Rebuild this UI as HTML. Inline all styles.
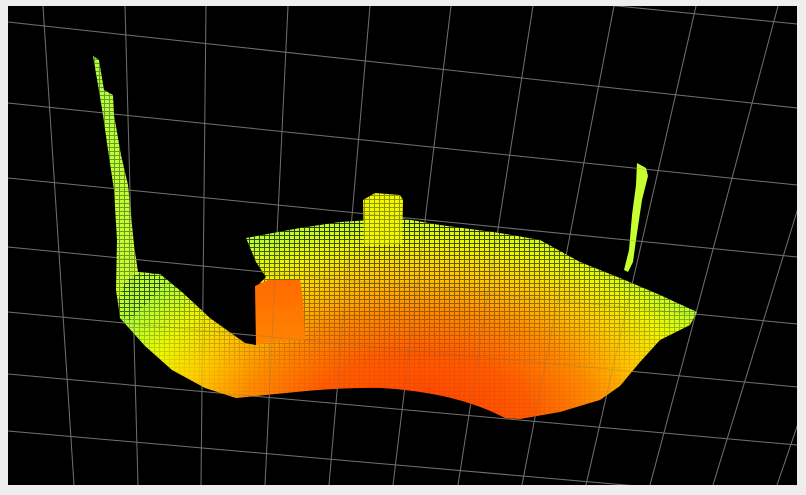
<!DOCTYPE html>
<html><head><meta charset="utf-8"><style>
html,body{margin:0;padding:0;background:#eeeeee;width:806px;height:495px;overflow:hidden}
svg{position:absolute;left:0;top:0}
</style></head><body>
<svg width="806" height="495" viewBox="0 0 806 495" xmlns="http://www.w3.org/2000/svg">
<defs>
<clipPath id="vp"><rect x="8" y="6" width="789" height="479"/></clipPath>
<radialGradient id="floor" gradientUnits="userSpaceOnUse" cx="0" cy="0" r="220" gradientTransform="translate(420 430) scale(1.5 1)">
<stop offset="0" stop-color="#ff3c00"/>
<stop offset="0.35" stop-color="#ff5c00"/>
<stop offset="0.55" stop-color="#ff8c00"/>
<stop offset="0.72" stop-color="#ffcc00"/>
<stop offset="0.86" stop-color="#ecf800"/>
<stop offset="1" stop-color="#b4ff30"/>
</radialGradient>
<linearGradient id="wall" x1="0" y1="56" x2="0" y2="340" gradientUnits="userSpaceOnUse">
<stop offset="0" stop-color="#b0ff40"/>
<stop offset="0.8" stop-color="#c8ff30"/>
<stop offset="1" stop-color="#e8f000"/>
</linearGradient>
<linearGradient id="box2" x1="0" y1="280" x2="0" y2="345" gradientUnits="userSpaceOnUse">
<stop offset="0" stop-color="#ff6a00"/>
<stop offset="1" stop-color="#ff8400"/>
</linearGradient>
<pattern id="pts" width="5" height="4" patternUnits="userSpaceOnUse">
<rect x="0" y="3" width="5" height="1" fill="#000"/>
<rect x="4" y="0" width="1" height="4" fill="#000"/>
</pattern>
<linearGradient id="mg" x1="0" y1="220" x2="0" y2="370" gradientUnits="userSpaceOnUse">
<stop offset="0" stop-color="#fff" stop-opacity="0.8"/>
<stop offset="0.5" stop-color="#fff" stop-opacity="0.45"/>
<stop offset="1" stop-color="#fff" stop-opacity="0.05"/>
</linearGradient>
<mask id="m"><rect x="0" y="0" width="806" height="495" fill="url(#mg)"/></mask>
</defs>
<rect x="8" y="6" width="789" height="479" fill="#000"/>
<g clip-path="url(#vp)">
<g id="grid" stroke="#6e6e6e" stroke-width="1" fill="none">
<line x1="8" y1="-55" x2="797" y2="24"/>
<line x1="8" y1="22" x2="797" y2="108"/>
<line x1="8" y1="103" x2="797" y2="185"/>
<line x1="8" y1="178" x2="797" y2="257"/>
<line x1="8" y1="247" x2="797" y2="324"/>
<line x1="8" y1="312" x2="797" y2="387"/>
<line x1="8" y1="374" x2="797" y2="445"/>
<line x1="8" y1="431" x2="797" y2="500"/>
<line x1="43" y1="6" x2="74" y2="485"/>
<line x1="125" y1="6" x2="138" y2="485"/>
<line x1="206" y1="6" x2="201" y2="485"/>
<line x1="288" y1="6" x2="265" y2="485"/>
<line x1="370" y1="6" x2="329" y2="485"/>
<line x1="451" y1="6" x2="393" y2="485"/>
<line x1="533" y1="6" x2="458" y2="485"/>
<line x1="614" y1="6" x2="522" y2="485"/>
<line x1="696" y1="6" x2="586" y2="485"/>
<line x1="778" y1="6" x2="650" y2="485"/>
<line x1="860" y1="6" x2="713" y2="485"/>
<line x1="941" y1="6" x2="777" y2="485"/>
</g>
<!-- left wall -->
<path d="M93,56 L99,60 L104,90 L113,95 L114,115 L121,155 L128,185 L131,215 L134,245 L138,272 L150,273 L168,280 L150,300 L130,320 L120,316 L116,290 L117,240 L114,190 L108,150 L103,115 L98,85 Z" fill="url(#wall)"/>
<!-- main floor -->
<path d="M246,238 L300,228 L340,222 L400,218 L440,225 L500,233 L540,240 L580,262 L620,278 L660,295 L697,312 L690,325 L660,340 L640,362 L620,386 L600,400 L560,412 L520,419 L505,418 C470,400 430,391 380,388 C330,387 280,394 236,398 L205,388 L172,370 L145,346 L120,318 L118,302 L125,282 L138,273 L160,274 L182,292 L210,318 L245,343 L256,345 L256,287 L266,277 L256,262 Z" fill="url(#floor)"/>
<path d="M246,238 L300,228 L340,222 L400,218 L440,225 L500,233 L540,240 L580,262 L620,278 L660,295 L697,312 L690,325 L660,340 L640,362 L620,386 L600,400 L560,412 L520,419 L505,418 C470,400 430,391 380,388 C330,387 280,394 236,398 L205,388 L172,370 L145,346 L120,318 L118,302 L125,282 L138,273 L160,274 L182,292 L210,318 L245,343 L256,345 L256,287 L266,277 L256,262 Z" fill="url(#pts)" mask="url(#m)"/>
<!-- front box face -->
<path d="M255,286 L268,280 L300,280 L303,300 L305,340 L268,342 L256,345 Z" fill="url(#box2)"/>
<!-- top box -->
<path d="M363,200 L375,193 L400,195 L403,200 L402,244 L364,246 Z" fill="#f2f800"/>
<path d="M363,200 L375,193 L400,195 L403,200 L402,244 L364,246 Z" fill="url(#pts)" opacity="0.4"/>
<!-- right post -->
<path d="M637,163 L646,168 L648,176 L642,200 L636,240 L633,262 L628,272 L624,270 L629,250 L632,215 L636,185 Z" fill="#c8ff30"/>
<path d="M93,56 L99,60 L104,90 L113,95 L114,115 L121,155 L128,185 L131,215 L134,245 L138,272 L150,273 L168,280 L150,300 L130,320 L120,316 L116,290 L117,240 L114,190 L108,150 L103,115 L98,85 Z" fill="url(#pts)" opacity="0.4"/>
<use href="#grid" opacity="0.25"/>
</g>
</svg>
</body></html>
